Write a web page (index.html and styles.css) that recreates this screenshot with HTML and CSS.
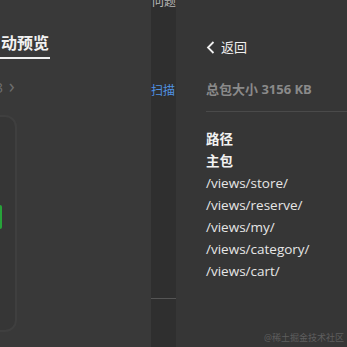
FILE: index.html
```html
<!DOCTYPE html>
<html>
<head>
    <title>分包预览</title>
    <link rel="stylesheet" href="styles.css">
</head>
<body>
    <div class="layout">
        <!-- Left: preview pane, cut off at the window edge -->
        <div class="preview">
            <div class="preview-tab">动预览</div>
            <div class="preview-more">3 <span class="chev">&#x203A;</span></div>
            <div class="phone">
                <div class="phone-btn"></div>
            </div>
        </div>

        <!-- Narrow strip between panes -->
        <div class="strip">
            <div class="strip-top">问题</div>
            <div class="strip-link">扫描</div>
            <div class="strip-line"></div>
        </div>

        <!-- Right: package detail -->
        <div class="detail">
            <div class="back">
                <svg width="9" height="13" viewBox="0 0 9 13"><path d="M7.5 1 L2 6.5 L7.5 12" fill="none" stroke="#f0f0f0" stroke-width="1.8"/></svg>
                <span>返回</span>
            </div>
            <div class="total">总包大小 3156 KB</div>
            <div class="divider"></div>
            <div class="path-list">
                <div class="path-head">路径</div>
                <div class="path-head">主包</div>
                <div>/views/store/</div>
                <div>/views/reserve/</div>
                <div>/views/my/</div>
                <div>/views/category/</div>
                <div>/views/cart/</div>
            </div>
        </div>
    </div>
    <div class="watermark">@稀土掘金技术社区</div>
</body>
</html>
```

FILE: styles.css
```css
* {
    margin: 0;
    padding: 0;
    box-sizing: border-box;
}
body {
    width: 347px;
    height: 347px;
    overflow: hidden;
    background-color: #363636;
    font-family: "Open Sans", "Noto Sans CJK SC", sans-serif;
    color: #e8e8e8;
}
.layout {
    display: flex;
    height: 347px;
}
/* Left preview pane */
.preview {
    width: 151px;
    background-color: #393939;
    padding-top: 32px;
}
.preview-tab {
    width: 50px;
    padding-left: 1px;
    font-size: 16px;
    font-weight: bold;
    color: #f2f2f2;
    line-height: 22px;
    border-bottom: 2px solid #f0f0f0;
    padding-bottom: 3px;
}
.preview-more {
    margin-top: 17px;
    margin-left: -5px;
    font-size: 14px;
    color: #6e6e6e;
    line-height: 20px;
}
.preview-more .chev {
    font-size: 20px;
    margin-left: 2px;
}
.phone {
    margin-top: 17px;
    margin-left: -40px;
    width: 57px;
    height: 217px;
    border: 2px solid #3f3f3f;
    border-radius: 12px;
    background-color: #363636;
    padding-top: 88px;
    padding-left: 38px;
}
.phone-btn {
    width: 2px;
    height: 24px;
    background-color: #27a33a;
    border-radius: 0 2px 2px 0;
}
/* Middle strip */
.strip {
    width: 25px;
    background-color: #2f2f2f;
    display: flex;
    flex-direction: column;
    font-size: 12px;
}
.strip-top {
    margin-top: -6px;
    color: #b8b8b8;
    line-height: 16px;
    padding-left: 1px;
}
.strip-link {
    margin-top: 73px;
    color: #4f92e3;
    line-height: 16px;
}
.strip-line {
    margin-top: 199px;
    height: 1px;
    background-color: #555;
}
/* Right detail pane */
.detail {
    flex: 1;
    padding: 38px 0 0 30px;
    font-size: 13.5px;
}
.back {
    display: flex;
    align-items: center;
    gap: 6px;
    font-size: 13px;
    color: #f0f0f0;
    line-height: 18px;
}
.total {
    margin-top: 24px;
    color: #8a8a8a;
    font-weight: bold;
    font-size: 13px;
    line-height: 18px;
}
.divider {
    margin-top: 13px;
    height: 1px;
    background-color: #4a4a4a;
}
.path-list {
    margin-top: 16px;
    line-height: 22px;
    color: #e6e6e6;
}
.path-head {
    font-weight: bold;
    color: #f2f2f2;
}
.watermark {
    position: absolute;
    right: 3px;
    bottom: 3px;
    font-size: 9px;
    color: #5e5e5e;
}
```
